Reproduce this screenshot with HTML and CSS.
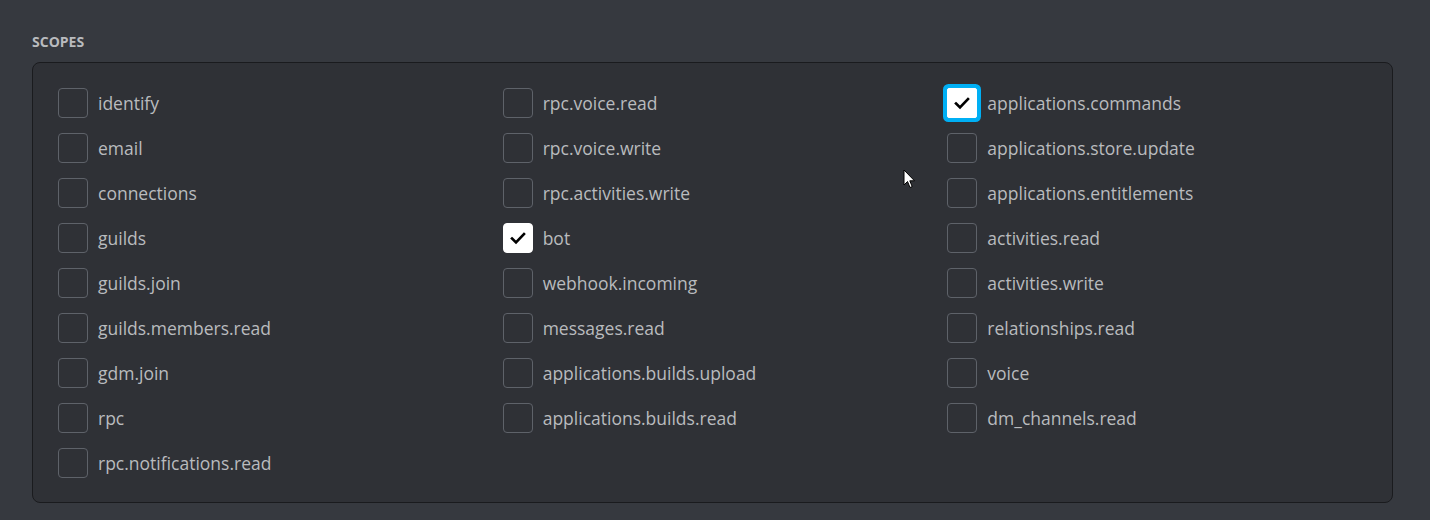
FILE: index.html
```html
<!DOCTYPE html>
<html>
<head>
<meta charset="utf-8">
<link rel="stylesheet" href="styles.css">
</head>
<body>
<div class="page">
  <h5 class="label">Scopes</h5>
  <div class="panel">
    <div class="grid">
      <label class="item"><span class="box"></span><span class="text">identify</span></label>
      <label class="item"><span class="box"></span><span class="text">rpc.voice.read</span></label>
      <label class="item"><span class="box checked focused"><svg viewBox="0 0 30 30" width="30" height="30"><path d="M9 15.5 L13 19.5 L21 11" fill="none" stroke="#000" stroke-width="2.6" stroke-linecap="square"/></svg></span><span class="text">applications.commands</span></label>

      <label class="item"><span class="box"></span><span class="text">email</span></label>
      <label class="item"><span class="box"></span><span class="text">rpc.voice.write</span></label>
      <label class="item"><span class="box"></span><span class="text">applications.store.update</span></label>

      <label class="item"><span class="box"></span><span class="text">connections</span></label>
      <label class="item"><span class="box"></span><span class="text">rpc.activities.write</span></label>
      <label class="item"><span class="box"></span><span class="text">applications.entitlements</span></label>

      <label class="item"><span class="box"></span><span class="text">guilds</span></label>
      <label class="item"><span class="box checked"><svg viewBox="0 0 30 30" width="30" height="30"><path d="M9 15.5 L13 19.5 L21 11" fill="none" stroke="#000" stroke-width="2.6" stroke-linecap="square"/></svg></span><span class="text">bot</span></label>
      <label class="item"><span class="box"></span><span class="text">activities.read</span></label>

      <label class="item"><span class="box"></span><span class="text">guilds.join</span></label>
      <label class="item"><span class="box"></span><span class="text">webhook.incoming</span></label>
      <label class="item"><span class="box"></span><span class="text">activities.write</span></label>

      <label class="item"><span class="box"></span><span class="text">guilds.members.read</span></label>
      <label class="item"><span class="box"></span><span class="text">messages.read</span></label>
      <label class="item"><span class="box"></span><span class="text">relationships.read</span></label>

      <label class="item"><span class="box"></span><span class="text">gdm.join</span></label>
      <label class="item"><span class="box"></span><span class="text">applications.builds.upload</span></label>
      <label class="item"><span class="box"></span><span class="text">voice</span></label>

      <label class="item"><span class="box"></span><span class="text">rpc</span></label>
      <label class="item"><span class="box"></span><span class="text">applications.builds.read</span></label>
      <label class="item"><span class="box"></span><span class="text">dm_channels.read</span></label>

      <label class="item"><span class="box"></span><span class="text">rpc.notifications.read</span></label>
    </div>
  </div>
</div>
<svg class="cursor" width="14" height="21" viewBox="0 0 14 21"><path d="M1 1 L1 16 L4.5 12.5 L7 18.5 L9.2 17.6 L6.8 11.8 L11.5 11.8 Z" fill="#fff" stroke="#000" stroke-width="1" stroke-linejoin="round"/></svg>
</body>
</html>
```
FILE: styles.css
```css
html, body {
  margin: 0;
  padding: 0;
  background: #36393f;
  height: 520px;
  overflow: hidden;
}
body {
  font-family: "Open Sans", "Noto Sans", sans-serif;
  position: relative;
}
.page {
  padding: 33px 37px 0 32px;
}
.label {
  margin: 0 0 11px 0;
  font-size: 14px;
  line-height: 18px;
  font-weight: 700;
  text-transform: uppercase;
  color: #b9bbbe;
}
.panel {
  background: #2f3136;
  border: 1px solid #1a1b1e;
  border-radius: 8px;
  padding: 25px 0 24px 25px;
}
.grid {
  display: grid;
  grid-template-columns: repeat(3, 1fr);
  row-gap: 15px;
}
.item {
  display: flex;
  align-items: center;
  gap: 10px;
  height: 30px;
}
.box {
  box-sizing: border-box;
  width: 30px;
  height: 30px;
  border: 1px solid #5e6269;
  border-radius: 4px;
  flex: none;
  display: block;
}
.box svg {
  display: block;
  margin: -1px;
}
.box.checked {
  background: #fff;
  border-color: #fff;
}
.box.focused {
  box-shadow: 0 0 0 4px #00aff4;
  border-radius: 2px;
}
.text {
  font-size: 17.5px;
  color: #b9bbbe;
  line-height: 24px;
}
.cursor {
  position: absolute;
  left: 903px;
  top: 169px;
}
```
